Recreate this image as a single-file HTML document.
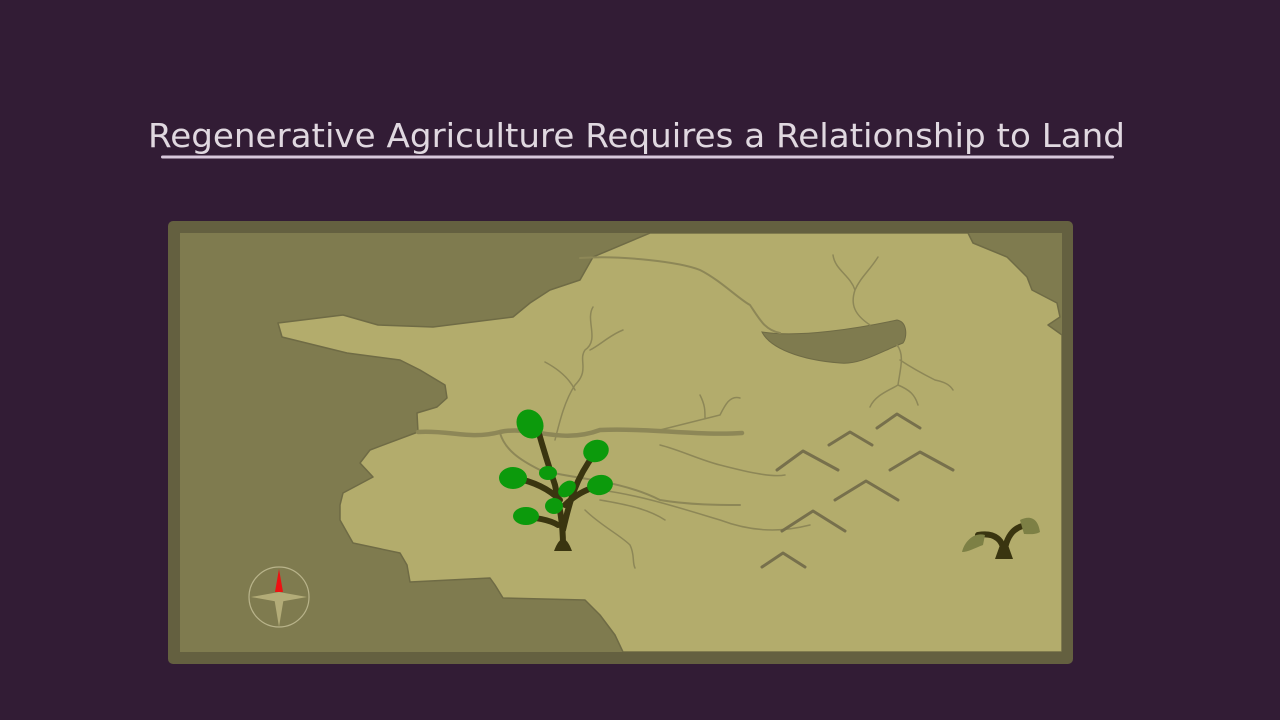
<!DOCTYPE html>
<html><head><meta charset="utf-8"><style>
html,body{margin:0;padding:0;background:#321c35;width:1280px;height:720px;overflow:hidden}
</style></head><body>
<svg width="1280" height="720" viewBox="0 0 1280 720" xmlns="http://www.w3.org/2000/svg">
<rect width="1280" height="720" fill="#321c35"/>
<text x="148" y="147" font-family="DejaVu Sans, sans-serif" font-size="33" fill="#e0d8e0" textLength="977" lengthAdjust="spacingAndGlyphs">Regenerative Agriculture Requires a Relationship to Land</text>
<rect x="161" y="155.5" width="953" height="3" rx="1.5" fill="#d8c8dc"/>
<rect x="168" y="221" width="905" height="443" rx="5" fill="#646040"/>
<rect x="180" y="233" width="882" height="419" fill="#7f7b4f"/>
<defs><clipPath id="c"><rect x="180" y="233" width="882" height="419"/></clipPath></defs>
<g clip-path="url(#c)">
<path d="M650,233 L968,233 L973,243 L1007,257 L1027,277 L1032,290 L1057,303 L1060,317 L1048,325 L1062,335 L1062,652 L623,652 L615,635 L600,615 L585,600 L503,598 L495,585 L490,578 L410,582 L407,565 L400,553 L353,543 L340,520 L340,505 L343,493 L373,477 L360,463 L370,450 L418,432 L417,413 L437,407 L447,398 L445,385 L420,370 L400,360 L347,353 L282,337 L278,323 L343,315 L378,325 L433,327 L513,317 L530,303 L550,290 L580,280 L593,257 Z" fill="#b3ac6c" stroke="#6f6b45" stroke-width="1.5" stroke-linejoin="round"/>
<path d="M762,332 C800,338 860,328 897,320 C908,322 907,338 903,343 C880,352 860,365 840,363 C800,360 770,348 762,332 Z" fill="#7f7b4f" stroke="#6f6b45" stroke-width="1"/>
<g fill="none" stroke="#8d8757" stroke-linecap="round">
<path d="M418,432 C450,430 470,440 500,432 C530,425 560,445 600,430 C650,428 700,436 742,433" stroke-width="4.5"/>
<path d="M500,433 C505,450 520,460 540,470 C580,480 620,480 660,500 C690,505 720,505 740,505" stroke-width="2"/>
<path d="M580,258 C620,255 680,262 700,270 C720,280 740,300 750,305 C760,320 765,330 780,333" stroke-width="2"/>
<path d="M593,307 C585,320 600,340 585,350 C578,360 590,370 575,385 C565,400 560,420 555,440" stroke-width="1.5"/>
<path d="M623,330 C610,335 600,345 590,350" stroke-width="1.5"/>
<path d="M545,362 C560,370 570,380 575,390" stroke-width="1.5"/>
<path d="M833,255 C835,270 850,275 855,290 C850,305 855,315 870,325 M878,257 C870,270 860,278 855,290" stroke-width="1.5"/>
<path d="M897,345 C905,355 900,370 898,385 C890,390 875,395 870,407 M900,360 C915,370 925,375 935,380 C945,382 950,385 953,390 M898,385 C910,390 915,395 918,405" stroke-width="1.5"/>
<path d="M660,430 C680,425 700,420 720,415 C725,405 730,395 740,398 M700,395 C705,405 705,410 705,418" stroke-width="1.5"/>
<path d="M660,445 C680,450 700,460 720,465 C740,470 770,478 785,475" stroke-width="1.5"/>
<path d="M600,490 C640,495 680,508 720,520 C760,535 790,530 810,525" stroke-width="1.5"/>
<path d="M585,510 C600,525 620,535 630,545 C635,555 632,562 635,568 M600,500 C630,505 650,510 665,520" stroke-width="1.5"/>
</g>
<g fill="none" stroke="#77704c" stroke-width="3" stroke-linecap="round" stroke-linejoin="round">
<path d="M777,470 L803,451 L838,470"/>
<path d="M829,445 L850,432 L872,445"/>
<path d="M877,428 L897,414 L920,428"/>
<path d="M890,470 L920,452 L953,470"/>
<path d="M835,500 L866,481 L898,500"/>
<path d="M782,531 L813,511 L845,531"/>
<path d="M762,567 L783,553 L805,567"/>
</g>
<g stroke="#3a3510" fill="none" stroke-linecap="round" stroke-width="6">
<path d="M563,545 C563,520 558,500 555,485 C550,470 545,455 538,430"/>
<path d="M563,530 C570,500 575,480 595,453"/>
<path d="M560,500 C550,490 535,482 515,478"/>
<path d="M565,505 C575,495 585,490 600,485"/>
<path d="M558,525 C550,520 535,517 520,517"/>
</g>
<path d="M554,551 C560,535 566,535 572,551 Z" fill="#3a3510"/>
<g fill="#0c9a0c">
<ellipse cx="530" cy="424" rx="13" ry="15" transform="rotate(-30 530 424)"/>
<ellipse cx="596" cy="451" rx="13" ry="11" transform="rotate(-20 596 451)"/>
<ellipse cx="513" cy="478" rx="14" ry="11"/>
<ellipse cx="600" cy="485" rx="13" ry="10" transform="rotate(-10 600 485)"/>
<ellipse cx="526" cy="516" rx="13" ry="9"/>
<ellipse cx="548" cy="473" rx="9" ry="7"/>
<ellipse cx="567" cy="489" rx="10" ry="7" transform="rotate(-40 567 489)"/>
<ellipse cx="554" cy="506" rx="9" ry="8"/>
</g>
<g stroke="#3a3510" fill="none" stroke-width="6" stroke-linecap="round">
<path d="M1004,555 C1004,540 995,532 978,535"/>
<path d="M1004,555 C1006,535 1015,525 1030,525"/>
</g>
<path d="M995,559 L1013,559 L1008,545 L1000,545 Z" fill="#3a3510"/>
<path d="M962,552 C965,540 975,532 985,535 L983,545 C975,548 968,552 962,552 Z" fill="#7d8045"/>
<path d="M1020,520 C1030,515 1038,518 1040,532 C1035,535 1028,534 1024,534 Z" fill="#7d8045"/>
<circle cx="279" cy="597" r="30" fill="none" stroke="#b8b38a" stroke-width="1.2"/>
<path d="M251,597 L279,592 L307,597 L279,602 Z M279,592 L284,597 L279,627 L274,597 Z" fill="#b3ac78"/>
<path d="M279,569 L283,592 L275,592 Z" fill="#ee1111"/>
</g>
</svg>
</body></html>
